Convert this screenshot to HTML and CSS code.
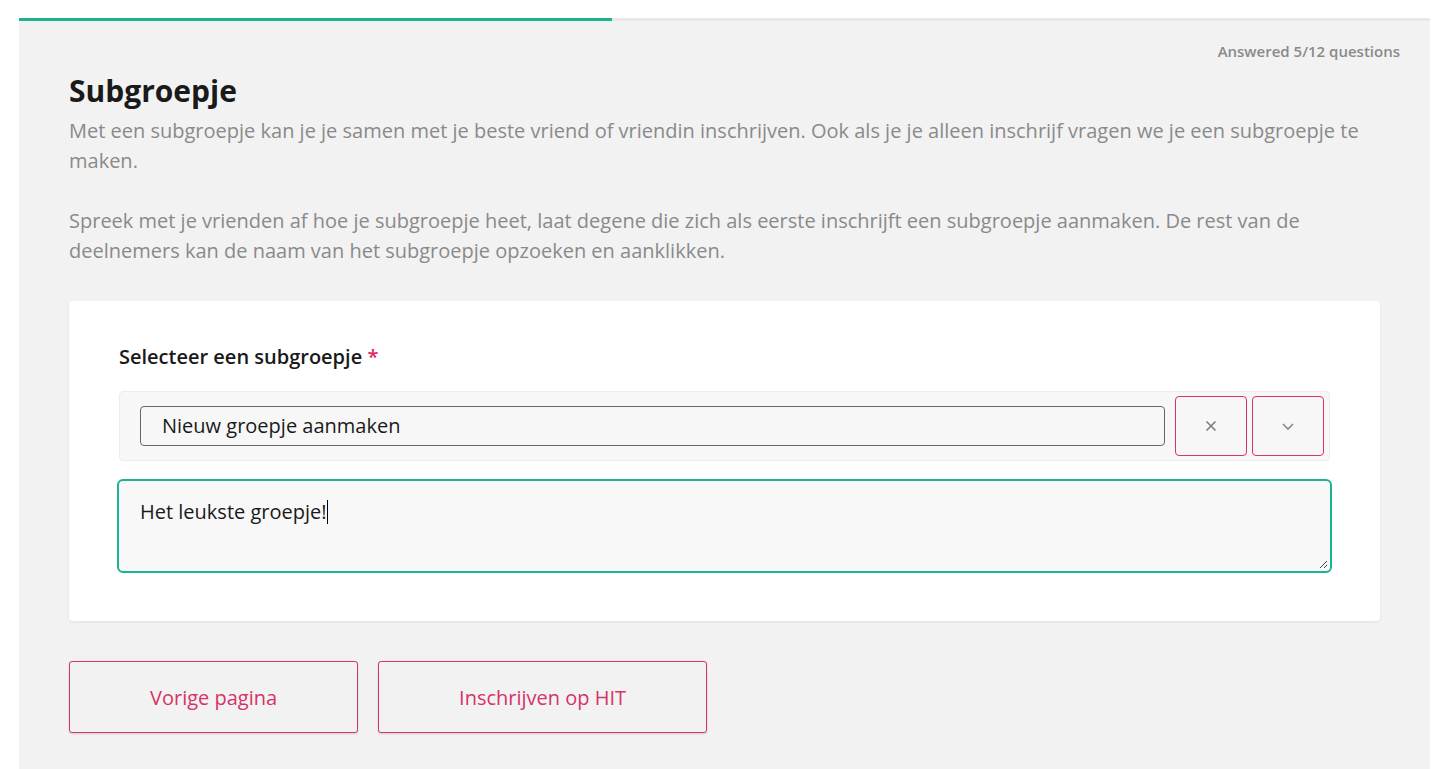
FILE: index.html
```html
<!DOCTYPE html>
<html lang="nl">
<head>
<meta charset="utf-8">
<title>Subgroepje</title>
<link rel="stylesheet" href="styles.css">
</head>
<body>
<div class="page">
  <div class="progress"><div class="progress-fill" style="width:42%"></div></div>
  <div class="content">
    <div class="answered">Answered 5/12 questions</div>
    <h1 class="title">Subgroepje</h1>
    <p class="desc">Met een subgroepje kan je je samen met je beste vriend of vriendin inschrijven. Ook als je je alleen inschrijf vragen we je een subgroepje te maken.</p>
    <p class="desc">Spreek met je vrienden af hoe je subgroepje heet, laat degene die zich als eerste inschrijft een subgroepje aanmaken. De rest van de deelnemers kan de naam van het subgroepje opzoeken en aanklikken.</p>
    <div class="card">
      <div class="label">Selecteer een subgroepje <span class="req">*</span></div>
      <div class="select">
        <div class="select-input">Nieuw groepje aanmaken</div>
        <button class="icon-btn" type="button">
          <svg width="12" height="12" viewBox="0 0 12 12"><path d="M1.5 1.5L10.5 10.5M10.5 1.5L1.5 10.5" stroke="#808080" stroke-width="1.7" fill="none"/></svg>
        </button>
        <button class="icon-btn" type="button">
          <svg width="14" height="10" viewBox="0 0 14 10"><path d="M2 3L7 8L12 3" stroke="#8a8a8a" stroke-width="1.7" fill="none"/></svg>
        </button>
      </div>
      <div class="textarea">Het leukste groepje!<span class="caret"></span>
        <svg class="grip" width="9" height="9" viewBox="0 0 9 9"><path d="M1 8L8 1M5 8L8 5" stroke="#444" stroke-width="1" fill="none"/></svg>
      </div>
    </div>
    <div class="actions">
      <button class="btn" type="button">Vorige pagina</button>
      <button class="btn" type="button">Inschrijven op HIT</button>
    </div>
  </div>
</div>
</body>
</html>
```

FILE: styles.css
```css
* { box-sizing: border-box; }
html, body { margin: 0; padding: 0; background: #ffffff; }
body { font-family: "Open Sans", "Noto Sans", sans-serif; color: #1a1a1a; }

.page {
  margin: 18px 15px 0 19px;
  background: #f2f2f2;
  min-height: 751px;
}
.progress { height: 3px; background: #e8e8e8; }
.progress-fill { height: 3px; background: #1ab394; }

.content { padding: 20px 30px 36px 50px; }

.answered {
  text-align: right;
  font-size: 15px;
  font-weight: 600;
  color: #8a8a8a;
  line-height: 20px;
}

.title {
  margin: 10px 0 5px 0;
  font-size: 30px;
  font-weight: 700;
  line-height: 40px;
  color: #1a1a1a;
}

.desc {
  margin: 0 20px 30px 0;
  font-size: 20px;
  line-height: 30px;
  color: #8a8a8a;
}
.desc + .desc { margin-bottom: 35px; }

.card {
  margin-right: 20px;
  background: #ffffff;
  border-radius: 4px;
  box-shadow: 0 1px 3px rgba(0,0,0,0.08);
  padding: 44px 50px 48px 50px;
}

.label {
  font-size: 20px;
  font-weight: 600;
  line-height: 24px;
  color: #1a1a1a;
}
.req { color: #e0245e; }

.select {
  margin-top: 22px;
  display: flex;
  align-items: center;
  gap: 5px;
  height: 70px;
  padding: 0 5px 0 20px;
  background: #f7f7f7;
  border: 1px solid #ececec;
  border-radius: 4px;
}
.select-input {
  flex: 1;
  height: 40px;
  margin-right: 5px;
  border: 1px solid #666;
  border-radius: 4px;
  padding: 0 21px;
  font-size: 20px;
  line-height: 38px;
  color: #1a1a1a;
  background: #f7f7f7;
}
.icon-btn {
  width: 72px;
  height: 60px;
  border: 1px solid #d63367;
  border-radius: 4px;
  background: #f7f7f7;
  display: flex;
  align-items: center;
  justify-content: center;
  padding: 0;
}

.textarea {
  position: relative;
  margin: 18px -2px 0 -2px;
  height: 94px;
  border: 2px solid #1ab394;
  border-radius: 6px;
  background: #f8f8f8;
  padding: 17px 21px 15px;
  font-size: 20px;
  line-height: 28px;
  color: #1a1a1a;
}
.caret {
  display: inline-block;
  width: 1px;
  height: 24px;
  background: #000;
  vertical-align: -5px;
}
.grip { position: absolute; right: 2px; bottom: 2px; }

.actions {
  margin-top: 40px;
  display: flex;
  gap: 20px;
}
.btn {
  height: 72px;
  padding: 0 80px;
  border: 1px solid #d63367;
  border-radius: 3px;
  background: #f2f2f2;
  box-shadow: 0 1px 2px rgba(0,0,0,0.15);
  color: #d63367;
  font-family: "Open Sans", "Noto Sans", sans-serif;
  font-size: 20px;
  font-weight: 400;
}
```
